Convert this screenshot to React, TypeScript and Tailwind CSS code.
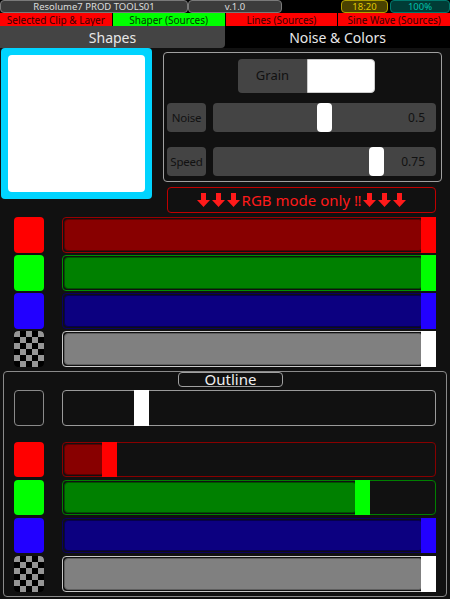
import React from 'react';

type BarColors = {
    outer: string;
    fill: string;
    fillBorder: string;
    thumb: string;
};

const RED: BarColors = { outer: 'border-[#9a0000]', fill: 'bg-[#880000]', fillBorder: 'border-[#5c0000]', thumb: 'bg-[#ff0000]' };
const GREEN: BarColors = { outer: 'border-[#009000]', fill: 'bg-[#008000]', fillBorder: 'border-[#005200]', thumb: 'bg-[#00ff00]' };
const BLUE: BarColors = { outer: 'border-[#0a0060]', fill: 'bg-[#0c0080]', fillBorder: 'border-[#06004c]', thumb: 'bg-[#2200ff]' };
const GRAY: BarColors = { outer: 'border-[#c8c8c8]', fill: 'bg-[#808080]', fillBorder: 'border-[#5e5e5e]', thumb: 'bg-white' };
const PLAIN: BarColors = { outer: 'border-[#9a9a9a]', fill: 'bg-transparent', fillBorder: 'border-transparent', thumb: 'bg-white' };

const THUMB = 15;
const BAR_W = 374;

const Bar: React.FC<{ value: number; c: BarColors }> = ({ value, c }) => {
    const left = Math.round((BAR_W - THUMB) * value);
    return (
        <div className={`relative w-[374px] h-full rounded-sm border ${c.outer} bg-[#111111] p-px`}>
            {left > 2 && (
                <div className={`h-full rounded-sm border ${c.fill} ${c.fillBorder}`} style={{ width: left }} />
            )}
            <div className={`absolute -top-px -bottom-px ${c.thumb}`} style={{ left: left - 1, width: THUMB }} />
        </div>
    );
};

const Checker: React.FC = () => (
    <svg width="30" height="36" viewBox="0 0 30 36" className="rounded-sm block">
        {Array.from({ length: 6 }).map((_, r) =>
            Array.from({ length: 5 }).map((_, col) => (
                <rect
                    key={`${r}-${col}`}
                    x={col * 6}
                    y={r * 6}
                    width="6"
                    height="6"
                    fill={(r + col) % 2 === 0 ? '#969696' : '#000000'}
                />
            ))
        )}
    </svg>
);

const Swatch: React.FC<{ color?: string; checker?: boolean; empty?: boolean }> = ({ color, checker, empty }) => {
    if (checker) return <div className="w-[30px] h-full overflow-hidden rounded-sm"><Checker /></div>;
    if (empty) return <div className="w-[30px] h-full rounded border border-[#8a8a8a] bg-[#111111]" />;
    return <div className={`w-[30px] h-full rounded-sm ${color}`} />;
};

const ColorRow: React.FC<{ h: string; swatch: React.ReactNode; value: number; c: BarColors }> = ({ h, swatch, value, c }) => (
    <div className={`flex ${h}`}>
        <div className="ml-[14px] mr-[18px] h-full">{swatch}</div>
        <Bar value={value} c={c} />
    </div>
);

const Slider: React.FC<{ label: string; value: number }> = ({ label, value }) => {
    const left = Math.round((223 - THUMB) * value);
    return (
        <div className="flex h-[29px] ml-[3px]">
            <div className="w-[39px] h-full rounded bg-[#444444] flex items-center justify-center text-[11.5px] tracking-[-0.2px] text-[#111111]">
                {label}
            </div>
            <div className="relative ml-[7px] w-[223px] h-full rounded bg-[#444444] flex items-center justify-end pr-[11px] text-[12px] text-[#111111]">
                {value}
                <div className="absolute top-0 bottom-0 w-[15px] bg-white rounded-sm" style={{ left }} />
            </div>
        </div>
    );
};

const Arrow: React.FC = () => (
    <svg width="13" height="14" viewBox="0 0 13 14" className="inline-block">
        <path d="M4 0h5v7h4l-6.5 7L0 7h4z" fill="#ff1a1a" />
    </svg>
);

const App: React.FC = () => {
    return (
        <div className="w-[450px] h-[599px] overflow-hidden bg-[#111111] font-['Noto_Sans',sans-serif]">
            {/* Status row */}
            <div className="flex h-[13px] bg-black text-[9.5px] leading-none">
                <div className="w-[188px] h-full border border-[#7a7a7a] rounded-sm bg-[#3c3c3c] text-[#dddddd] flex items-center justify-center">
                    Resolume7 PROD TOOLS01
                </div>
                <div className="w-[94px] h-full border border-[#7a7a7a] rounded-sm bg-[#3c3c3c] text-[#dddddd] flex items-center justify-center">
                    v.1.0
                </div>
                <div className="flex-1" />
                <div className="w-[47px] h-full border border-[#b0a000] rounded-sm bg-[#4a4200] text-[#e0c800] flex items-center justify-center">
                    18:20
                </div>
                <div className="ml-[2px] w-[60px] h-full border border-[#00786c] rounded-sm bg-[#003c36] text-[#00c0ac] flex items-center justify-center">
                    100%
                </div>
            </div>

            {/* Source tabs */}
            <div className="grid grid-cols-4 gap-px h-[13px] bg-black text-[10px] leading-none text-[#3a0000]">
                <div className="bg-[#ff0000] flex items-center justify-center">Selected Clip &amp; Layer</div>
                <div className="bg-[#00ff00] flex items-center justify-center text-[#003a00]">Shaper (Sources)</div>
                <div className="bg-[#ff0000] flex items-center justify-center">Lines (Sources)</div>
                <div className="bg-[#ff0000] flex items-center justify-center">Sine Wave (Sources)</div>
            </div>

            {/* Page tabs */}
            <div className="flex h-[22px] bg-black text-[14px] text-[#e8e8e8]">
                <div className="w-[225px] h-full bg-[#444444] rounded-br flex items-center justify-center">Shapes</div>
                <div className="flex-1 h-full flex items-center justify-center">Noise &amp; Colors</div>
            </div>

            {/* Preview + noise panel */}
            <div className="flex">
                <div className="ml-px w-[151px] h-[151px] bg-[#00d4ff] rounded-sm p-[7px]">
                    <div className="w-full h-full bg-white rounded-sm" />
                </div>
                <div className="ml-[11px] mt-1">
                    <div className="w-[279px] h-[130px] border border-[#a0a0a0] rounded pt-[6px]">
                        <div className="flex ml-[74px] h-[34px]">
                            <div className="w-[69px] h-full bg-[#444444] rounded-l flex items-center justify-center text-[13px] text-[#111111]">
                                Grain
                            </div>
                            <div className="w-[68px] h-full bg-white rounded-r border border-[#cccccc]" />
                        </div>
                        <div className="mt-[10px] flex flex-col gap-[15px]">
                            <Slider label="Noise" value={0.5} />
                            <Slider label="Speed" value={0.75} />
                        </div>
                    </div>
                    <div className="mt-[5px] ml-1 w-[269px] h-[26px] border border-[#c00000] rounded-sm flex items-center justify-center text-[15px] text-[#ff1a1a] leading-none gap-[2px]">
                        <Arrow />
                        <Arrow />
                        <Arrow />
                        <span>RGB mode only ‼</span>
                        <Arrow />
                        <Arrow />
                        <Arrow />
                    </div>
                </div>
            </div>

            {/* Fill colour rows */}
            <div className="mt-1 flex flex-col gap-[2px]">
                <ColorRow h="h-[36px]" swatch={<Swatch color="bg-[#ff0000]" />} value={1} c={RED} />
                <ColorRow h="h-[36px]" swatch={<Swatch color="bg-[#00ff00]" />} value={1} c={GREEN} />
                <ColorRow h="h-[36px]" swatch={<Swatch color="bg-[#2200ff]" />} value={1} c={BLUE} />
                <ColorRow h="h-[36px]" swatch={<Swatch checker />} value={1} c={GRAY} />
            </div>

            {/* Outline */}
            <div className="mt-1 ml-[3px] w-[444px] h-[226px] border border-[#8a8a8a] rounded-sm">
                <div className="ml-[174px] w-[105px] h-[15px] border border-[#a0a0a0] rounded-sm flex items-center justify-center text-[15px] text-[#eeeeee] leading-none">
                    Outline
                </div>
                <div className="-ml-[4px] mt-[3px]">
                    <ColorRow h="h-[36px]" swatch={<Swatch empty />} value={0.2} c={PLAIN} />
                    <div className="mt-4 flex flex-col gap-[3px]">
                        <ColorRow h="h-[35px]" swatch={<Swatch color="bg-[#ff0000]" />} value={0.111} c={{ ...RED, outer: 'border-[#880000]' }} />
                        <ColorRow h="h-[35px]" swatch={<Swatch color="bg-[#00ff00]" />} value={0.816} c={{ ...GREEN, outer: 'border-[#008000]' }} />
                        <ColorRow h="h-[35px]" swatch={<Swatch color="bg-[#2200ff]" />} value={1} c={BLUE} />
                        <ColorRow h="h-[36px]" swatch={<Swatch checker />} value={1} c={GRAY} />
                    </div>
                </div>
            </div>
        </div>
    );
};

export default App;
